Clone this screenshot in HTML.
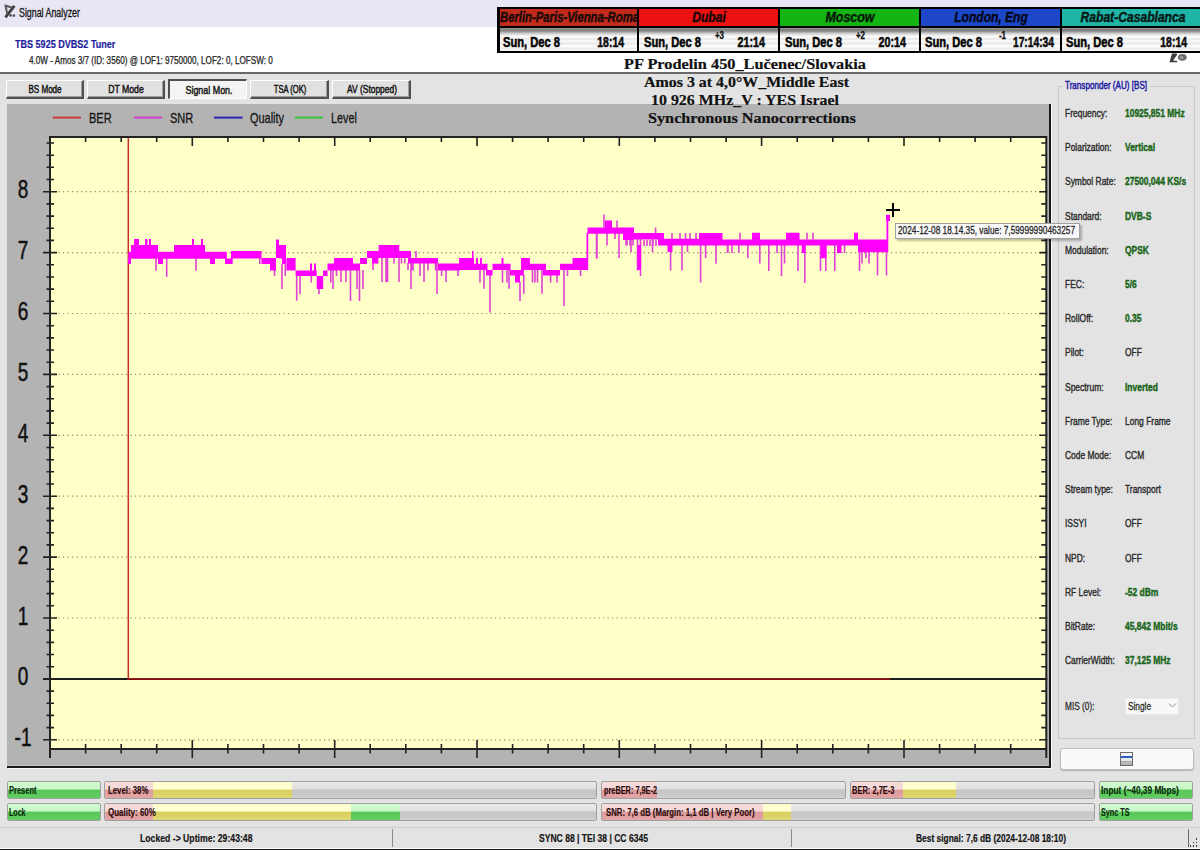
<!DOCTYPE html>
<html><head><meta charset="utf-8"><title>Signal Analyzer</title><style>
html,body{margin:0;padding:0;}
body{width:1200px;height:850px;position:relative;overflow:hidden;background:#E3E3E3;font-family:"Liberation Sans",sans-serif;}
.a{position:absolute;box-sizing:border-box;}
.t{position:absolute;white-space:pre;line-height:1;transform-origin:0 0;}
.btn{position:absolute;box-sizing:border-box;background:#E1E1E1;border-top:1px solid #fff;border-left:1px solid #fff;border-right:2px solid #505050;border-bottom:2px solid #505050;box-shadow:inset -1px -1px 0 #A0A0A0;}
.bar{position:absolute;box-sizing:border-box;border:1px solid #A0A0A0;border-radius:2px;overflow:hidden;background:linear-gradient(#EAEAEA 0,#E0E0E0 42%,#C6C6C6 50%,#C8C8C8 80%,#D4D4D4 100%);}
.seg{position:absolute;top:0;bottom:0;}
.pink{background:linear-gradient(#F6DADA 0,#F6DADA 45%,#DE9A9A 50%,#E2A6A6 100%);}
.yel{background:linear-gradient(#FFFFCF 0,#FFFFCF 45%,#D9CF60 50%,#E0D870 100%);}
.grn{background:linear-gradient(#D2FCD2 0,#C6F6C6 45%,#58C658 50%,#60CE60 100%);}
.hdr{position:absolute;top:0;height:19px;}
</style></head><body>
<div class="a" style="left:0px;top:0px;width:1200px;height:27px;background:#E8E6F4;"></div>
<div class="a" style="left:0px;top:27px;width:1200px;height:46px;background:#FFFFFF;"></div>
<div class="a" style="left:0px;top:72px;width:1200px;height:2px;background:#6A6A6A;"></div>
<svg class="a" style="left:0;top:0" width="22" height="24"><path d="M5.4 17.4L14.4 5.8" stroke="#3e3e3e" stroke-width="2.8" fill="none"/><path d="M4.6 5.2L12.5 7.8M5.6 6L7.2 13.8" stroke="#585858" stroke-width="2" fill="none"/><circle cx="10.6" cy="15.4" r="1.3" fill="#4a4a4a"/><circle cx="13.9" cy="15.6" r="1.3" fill="#4a4a4a"/></svg>
<svg class="a" style="left:1160px;top:48px" width="40" height="20"><path d="M12 5.5H16.8L17 7L13 12.5L17.5 13L17 14.3H9.5L9.8 13.2Z" fill="#3c3c3c"/><ellipse cx="22.3" cy="9.3" rx="4.4" ry="3.4" fill="#6a6a6a"/><ellipse cx="21.5" cy="9.5" rx="2" ry="1.6" fill="#9a9a9a"/></svg>
<div class="a" style="left:497px;top:7px;width:720px;height:46px;background:#000;"></div>
<div class="a" style="left:499.5px;top:9px;width:137.5px;height:17px;background:#C22A1C;"></div>
<div class="a" style="left:499.5px;top:28px;width:137.5px;height:23px;background:linear-gradient(#a0a0a0 0,#808080 1.2px,#858585 3px,#b4b4b4 4.5px,#dadada 6px,#f6f6f6 8px,#ffffff 9px,#e6e6e6 11px,#fcfcfc 13px,#e8e8e8 15.5px,#ffffff 18px,#ececec 20.5px,#f8f8f8 23px);"></div>
<div class="a" style="left:639.0px;top:9px;width:139.0px;height:17px;background:#EC1212;"></div>
<div class="a" style="left:639.0px;top:28px;width:139.0px;height:23px;background:linear-gradient(#a0a0a0 0,#808080 1.2px,#858585 3px,#b4b4b4 4.5px,#dadada 6px,#f6f6f6 8px,#ffffff 9px,#e6e6e6 11px,#fcfcfc 13px,#e8e8e8 15.5px,#ffffff 18px,#ececec 20.5px,#f8f8f8 23px);"></div>
<div class="a" style="left:780.0px;top:9px;width:138.5px;height:17px;background:#14B414;"></div>
<div class="a" style="left:780.0px;top:28px;width:138.5px;height:23px;background:linear-gradient(#a0a0a0 0,#808080 1.2px,#858585 3px,#b4b4b4 4.5px,#dadada 6px,#f6f6f6 8px,#ffffff 9px,#e6e6e6 11px,#fcfcfc 13px,#e8e8e8 15.5px,#ffffff 18px,#ececec 20.5px,#f8f8f8 23px);"></div>
<div class="a" style="left:920.5px;top:9px;width:139.0px;height:17px;background:#1C48C8;"></div>
<div class="a" style="left:920.5px;top:28px;width:139.0px;height:23px;background:linear-gradient(#a0a0a0 0,#808080 1.2px,#858585 3px,#b4b4b4 4.5px,#dadada 6px,#f6f6f6 8px,#ffffff 9px,#e6e6e6 11px,#fcfcfc 13px,#e8e8e8 15.5px,#ffffff 18px,#ececec 20.5px,#f8f8f8 23px);"></div>
<div class="a" style="left:1061.5px;top:9px;width:147.5px;height:17px;background:#1EB5A6;"></div>
<div class="a" style="left:1061.5px;top:28px;width:147.5px;height:23px;background:linear-gradient(#a0a0a0 0,#808080 1.2px,#858585 3px,#b4b4b4 4.5px,#dadada 6px,#f6f6f6 8px,#ffffff 9px,#e6e6e6 11px,#fcfcfc 13px,#e8e8e8 15.5px,#ffffff 18px,#ececec 20.5px,#f8f8f8 23px);"></div>
<div class="btn" style="left:6px;top:80px;width:78px;height:19px;"></div>
<div class="btn" style="left:87px;top:80px;width:78px;height:19px;"></div>
<div class="a" style="left:168px;top:79px;width:79px;height:20px;background:#F4F4F4;border-top:2px solid #505050;border-left:2px solid #505050;border-right:1px solid #fff;border-bottom:1px solid #fff;"></div>
<div class="btn" style="left:250px;top:80px;width:79px;height:19px;"></div>
<div class="btn" style="left:332px;top:80px;width:79px;height:19px;"></div>
<div class="a" style="left:7px;top:104px;width:1042px;height:662px;background:#B3B3B3;"></div>
<div class="a" style="left:1049.2px;top:104px;width:1.8px;height:664px;background:#1a1a1a;"></div>
<div class="a" style="left:1051px;top:104px;width:1px;height:665px;background:#FAFAFA;"></div>
<div class="a" style="left:7px;top:765px;width:1042px;height:1px;background:#C4C4C4;"></div>
<div class="a" style="left:7px;top:766px;width:1044px;height:1.8px;background:#1a1a1a;"></div>
<div class="a" style="left:7px;top:767.8px;width:1045px;height:1px;background:#FAFAFA;"></div>
<svg class="a" style="left:0;top:0" width="1200" height="850" viewBox="0 0 1200 850"><rect x="50" y="137" width="996.3" height="612" fill="#FFFFC8"/><line x1="54" y1="739.8" x2="1042.3" y2="739.8" stroke="#8a8a6a" stroke-width="1.2" stroke-dasharray="1.2 3.3"/><line x1="54" y1="618.0" x2="1042.3" y2="618.0" stroke="#8a8a6a" stroke-width="1.2" stroke-dasharray="1.2 3.3"/><line x1="54" y1="557.1" x2="1042.3" y2="557.1" stroke="#8a8a6a" stroke-width="1.2" stroke-dasharray="1.2 3.3"/><line x1="54" y1="496.2" x2="1042.3" y2="496.2" stroke="#8a8a6a" stroke-width="1.2" stroke-dasharray="1.2 3.3"/><line x1="54" y1="435.3" x2="1042.3" y2="435.3" stroke="#8a8a6a" stroke-width="1.2" stroke-dasharray="1.2 3.3"/><line x1="54" y1="374.4" x2="1042.3" y2="374.4" stroke="#8a8a6a" stroke-width="1.2" stroke-dasharray="1.2 3.3"/><line x1="54" y1="313.5" x2="1042.3" y2="313.5" stroke="#8a8a6a" stroke-width="1.2" stroke-dasharray="1.2 3.3"/><line x1="54" y1="252.6" x2="1042.3" y2="252.6" stroke="#8a8a6a" stroke-width="1.2" stroke-dasharray="1.2 3.3"/><line x1="54" y1="191.7" x2="1042.3" y2="191.7" stroke="#8a8a6a" stroke-width="1.2" stroke-dasharray="1.2 3.3"/><line x1="43" y1="678.9" x2="1046.3" y2="678.9" stroke="#1e1e1e" stroke-width="2"/><path d="M50 758V137H1046.3V758M1046.3 749H50" fill="none" stroke="#222" stroke-width="2"/><path d="M43 739.8H57M1039.3 739.8H1047.3M46.5 727.6H54M1041.3 727.6H1046.3M46.5 715.4H54M1041.3 715.4H1046.3M46.5 703.3H54M1041.3 703.3H1046.3M46.5 691.1H54M1041.3 691.1H1046.3M43 678.9H57M1039.3 678.9H1047.3M46.5 666.7H54M1041.3 666.7H1046.3M46.5 654.5H54M1041.3 654.5H1046.3M46.5 642.4H54M1041.3 642.4H1046.3M46.5 630.2H54M1041.3 630.2H1046.3M43 618.0H57M1039.3 618.0H1047.3M46.5 605.8H54M1041.3 605.8H1046.3M46.5 593.6H54M1041.3 593.6H1046.3M46.5 581.5H54M1041.3 581.5H1046.3M46.5 569.3H54M1041.3 569.3H1046.3M43 557.1H57M1039.3 557.1H1047.3M46.5 544.9H54M1041.3 544.9H1046.3M46.5 532.7H54M1041.3 532.7H1046.3M46.5 520.6H54M1041.3 520.6H1046.3M46.5 508.4H54M1041.3 508.4H1046.3M43 496.2H57M1039.3 496.2H1047.3M46.5 484.0H54M1041.3 484.0H1046.3M46.5 471.8H54M1041.3 471.8H1046.3M46.5 459.7H54M1041.3 459.7H1046.3M46.5 447.5H54M1041.3 447.5H1046.3M43 435.3H57M1039.3 435.3H1047.3M46.5 423.1H54M1041.3 423.1H1046.3M46.5 410.9H54M1041.3 410.9H1046.3M46.5 398.8H54M1041.3 398.8H1046.3M46.5 386.6H54M1041.3 386.6H1046.3M43 374.4H57M1039.3 374.4H1047.3M46.5 362.2H54M1041.3 362.2H1046.3M46.5 350.0H54M1041.3 350.0H1046.3M46.5 337.9H54M1041.3 337.9H1046.3M46.5 325.7H54M1041.3 325.7H1046.3M43 313.5H57M1039.3 313.5H1047.3M46.5 301.3H54M1041.3 301.3H1046.3M46.5 289.1H54M1041.3 289.1H1046.3M46.5 277.0H54M1041.3 277.0H1046.3M46.5 264.8H54M1041.3 264.8H1046.3M43 252.6H57M1039.3 252.6H1047.3M46.5 240.4H54M1041.3 240.4H1046.3M46.5 228.2H54M1041.3 228.2H1046.3M46.5 216.1H54M1041.3 216.1H1046.3M46.5 203.9H54M1041.3 203.9H1046.3M43 191.7H57M1039.3 191.7H1047.3M46.5 179.5H54M1041.3 179.5H1046.3M46.5 167.3H54M1041.3 167.3H1046.3M46.5 155.2H54M1041.3 155.2H1046.3M46.5 143.0H54M1041.3 143.0H1046.3M85.6 137V142M85.6 744V753.5M121.2 137V142M121.2 744V753.5M156.7 137V142M156.7 744V753.5M192.3 137V146M192.3 740V758M227.9 137V142M227.9 744V753.5M263.5 137V142M263.5 744V753.5M299.1 137V142M299.1 744V753.5M334.7 137V146M334.7 740V758M370.2 137V142M370.2 744V753.5M405.8 137V142M405.8 744V753.5M441.4 137V142M441.4 744V753.5M477.0 137V146M477.0 740V758M512.6 137V142M512.6 744V753.5M548.1 137V142M548.1 744V753.5M583.7 137V142M583.7 744V753.5M619.3 137V146M619.3 740V758M654.9 137V142M654.9 744V753.5M690.5 137V142M690.5 744V753.5M726.1 137V142M726.1 744V753.5M761.6 137V146M761.6 740V758M797.2 137V142M797.2 744V753.5M832.8 137V142M832.8 744V753.5M868.4 137V142M868.4 744V753.5M904.0 137V146M904.0 740V758M939.6 137V142M939.6 744V753.5M975.1 137V142M975.1 744V753.5M1010.7 137V142M1010.7 744V753.5" stroke="#222" stroke-width="1.6" fill="none"/><path d="M128.3 138V678.9H890" stroke="#C8302A" stroke-width="1.5" fill="none"/><line x1="128.3" y1="679.2" x2="890" y2="679.2" stroke="#7a1010" stroke-width="1.6"/><path d="M129.0 258.0V264.0M156.0 258.0V270.8M166.7 258.0V276.7M196.0 258.0V270.8M259.8 258.0V264.0M274.5 270.0V276.0M282.0 264.0V289.0M285.3 264.0V276.0M296.7 276.0V300.8M300.0 276.0V294.3M311.3 276.0V282.4M319.0 289.0V294.3M330.8 270.0V282.4M333.0 270.0V289.0M341.0 270.0V282.0M346.0 270.0V282.0M350.5 270.0V301.0M357.0 270.0V289.0M359.5 270.0V301.0M363.0 270.0V289.0M373.0 263.0V270.0M382.0 258.0V282.0M386.0 258.0V282.0M387.5 258.0V282.0M399.0 258.0V282.0M408.0 263.0V270.0M411.0 263.0V289.0M416.0 251.0V258.0M424.0 263.0V282.0M437.0 263.0V294.0M446.0 270.0V282.0M458.0 270.0V276.0M480.0 270.0V282.5M484.0 270.0V288.8M490.0 275.0V312.5M502.5 270.0V282.5M507.0 270.0V282.5M509.0 270.0V288.8M520.0 282.0V301.0M523.8 275.0V293.8M532.5 270.0V282.5M535.0 270.0V282.5M537.5 270.0V282.5M542.0 270.0V293.8M550.6 275.0V282.5M557.0 275.0V282.5M564.0 270.0V306.0M567.5 270.0V276.0M580.6 270.0V276.0M580.6 270.0V276.0M596.5 233.0V258.0M597.0 233.0V258.8M604.0 214.4V227.5M607.0 233.0V245.6M615.0 233.0V239.0M617.0 220.6V227.5M619.0 233.0V258.0M626.0 240.0V245.6M631.0 240.0V252.0M637.5 239.0V270.6M640.5 239.0V276.0M652.5 239.0V252.0M655.6 227.5V233.0M670.6 245.0V270.6M672.0 233.0V239.0M680.0 233.0V239.0M682.0 245.0V270.6M685.6 233.0V239.0M687.5 245.0V252.0M690.0 233.0V239.0M696.0 233.0V239.0M700.6 245.0V282.5M705.6 245.0V258.0M716.0 245.0V263.8M728.0 245.0V252.0M727.5 245.0V253.0M732.0 245.0V253.0M738.8 245.0V253.0M740.0 232.8V239.5M747.8 245.0V258.2M759.8 245.0V263.5M768.8 245.0V271.0M777.0 245.0V253.0M781.5 245.0V276.2M784.5 245.0V263.5M798.0 245.0V271.0M804.8 245.0V283.0M807.0 232.8V239.5M813.0 232.8V239.5M820.5 245.0V271.0M825.8 245.0V271.0M834.8 245.0V271.0M844.5 245.0V253.0M859.5 252.0V271.0M862.0 252.0V263.5M866.0 252.0V258.0M869.0 252.0V263.5M877.5 252.0V275.5M886.5 252.0V275.5M336.5 270.0V276.0M377.7 258.0V263.5M394.0 251.0V263.5M401.5 258.0V263.5M404.8 258.0V263.5M412.3 263.0V270.5M413.0 263.0V270.5M420.0 263.0V276.0M428.0 263.0V270.5M435.6 263.0V270.5M441.6 270.0V276.0M627.0 240.0V245.5M630.0 240.0V245.5M633.0 240.0V245.5M644.0 240.0V246.0M647.0 240.0V246.0M650.0 240.0V246.0M653.0 240.0V246.0M656.0 240.0V246.0M575.0 258.0V270.0M578.0 258.0V270.0M582.0 258.0V270.0" stroke="#E040D8" stroke-width="1.6" fill="none"/><path d="M128.3 251.7H131.0V264.0H128.3ZM131.0 245.0H134.0V258.7H131.0ZM134.0 239.0H139.0V258.7H134.0ZM139.0 245.0H158.0V258.7H139.0ZM145.0 239.0H147.5V245.0H145.0ZM149.0 239.0H151.0V245.0H149.0ZM158.0 251.7H165.0V258.7H158.0ZM158.0 258.0H163.0V264.0H158.0ZM165.0 251.7H174.0V258.7H165.0ZM174.0 245.0H205.0V258.7H174.0ZM192.0 239.0H194.0V245.0H192.0ZM201.0 239.0H203.0V245.0H201.0ZM205.0 251.7H226.8V258.7H205.0ZM210.0 258.0H215.0V264.0H210.0ZM225.0 258.6H232.7V264.0H225.0ZM231.0 251.0H261.5V258.6H231.0ZM261.5 258.0H270.7V264.0H261.5ZM270.0 258.0H276.0V270.5H270.0ZM276.0 239.6H279.0V258.0H276.0ZM279.0 245.0H286.0V258.6H279.0ZM282.0 258.0H286.0V264.0H282.0ZM286.4 258.0H295.6V270.5H286.4ZM295.6 270.5H316.7V276.0H295.6ZM310.0 263.5H312.0V270.5H310.0ZM314.0 263.5H316.0V270.5H314.0ZM316.7 276.0H323.2V289.0H316.7ZM323.0 270.5H327.5V276.0H323.0ZM327.5 263.5H334.0V270.5H327.5ZM334.0 258.0H353.0V270.5H334.0ZM353.0 263.5H360.0V270.5H353.0ZM360.0 258.0H367.0V264.0H360.0ZM367.0 251.0H380.0V258.0H367.0ZM372.0 258.0H378.0V263.5H372.0ZM378.7 245.0H399.3V251.0H378.7ZM378.7 251.0H399.3V258.0H378.7ZM399.0 251.0H411.0V258.0H399.0ZM408.0 258.0H438.0V263.5H408.0ZM438.0 263.5H460.0V270.5H438.0ZM459.0 258.0H474.0V270.0H459.0ZM472.0 251.0H473.5V258.0H472.0ZM474.0 263.8H487.5V270.0H474.0ZM476.0 258.0H478.0V264.0H476.0ZM480.0 258.0H482.0V264.0H480.0ZM486.0 270.0H492.5V275.6H486.0ZM492.5 263.8H510.6V270.0H492.5ZM501.5 258.0H503.5V264.0H501.5ZM510.0 270.0H523.8V275.6H510.0ZM515.0 275.0H520.0V282.5H515.0ZM521.0 258.0H530.0V263.8H521.0ZM521.0 263.8H530.0V270.0H521.0ZM530.0 263.8H546.0V270.0H530.0ZM543.0 270.0H560.0V275.6H543.0ZM560.0 263.8H572.5V270.0H560.0ZM572.5 258.0H587.5V270.0H572.5ZM586.5 233.0H588.2V270.0H586.5ZM637.5 245.0H641.0V270.0H637.5ZM587.5 227.5H605.0V233.8H587.5ZM605.0 220.6H612.0V233.8H605.0ZM612.0 227.5H634.0V233.8H612.0ZM623.0 233.0H634.0V240.0H623.0ZM634.0 233.0H664.0V239.5H634.0ZM658.0 239.0H664.0V245.6H658.0ZM664.0 238.8H699.0V245.6H664.0ZM667.5 245.0H672.5V252.0H667.5ZM699.0 233.0H722.5V245.6H699.0ZM722.5 239.5H752.0V245.5H722.5ZM752.0 232.8H760.0V245.5H752.0ZM760.0 239.5H786.0V245.5H760.0ZM786.0 232.8H799.5V245.5H786.0ZM799.5 239.5H858.0V245.5H799.5ZM801.7 245.0H805.5V253.0H801.7ZM820.5 245.0H826.5V258.2H820.5ZM837.0 245.0H841.5V253.0H837.0ZM854.0 232.8H858.0V239.5H854.0ZM858.0 239.5H886.5V252.2H858.0ZM886.0 214.8H890.0V221.0H886.0ZM886.5 221.0H888.3V252.0H886.5Z" fill="#FF00FF"/><path d="M886 210H900M893 203V217" stroke="#000" stroke-width="2"/><path d="M52.7 117.6H81" stroke="#D23A3A" stroke-width="2"/><path d="M134 117.6H162" stroke="#D040D0" stroke-width="2"/><path d="M214 117.6H242.5" stroke="#2828B0" stroke-width="2"/><path d="M295 117.6H323" stroke="#3CC43C" stroke-width="2"/></svg>
<div class="a" style="left:1058px;top:86px;width:137px;height:653px;border:1px solid #C8C8C8;background:transparent;"></div>
<div class="a" style="left:1062px;top:80px;width:88px;height:12px;background:#E3E3E3;"></div>
<div class="a" style="left:1125px;top:697.5px;width:54px;height:17px;background:#F8F8F8;border:1px solid #EAEAEA;"></div>
<svg class="a" style="left:1168px;top:702px" width="9" height="7"><path d="M1 1.5L4.5 5L8 1.5" stroke="#888" fill="none" stroke-width="1"/></svg>
<div class="a" style="left:1059.5px;top:748px;width:134px;height:22px;background:#FAFAFA;border:1px solid #BDBDBD;border-radius:3px;box-shadow:0 1px 1px rgba(0,0,0,.2);"></div>
<div class="a" style="left:1120px;top:752px;width:13px;height:14px;border:1px solid #6a6a6a;background:linear-gradient(#f4f4f4 0,#f4f4f4 3px,#2a5cc8 3px,#2a5cc8 5px,#e8e8e8 5px,#e8e8e8 8px,#909090 8px,#c0c0c0 9px,#b0b0b0 12px);"></div>
<div class="a" style="left:894.5px;top:222.5px;width:185px;height:16.5px;background:#F8F8F8;border:1px solid #A0A0A0;box-shadow:2px 2px 2px rgba(0,0,0,.25);"></div>
<div class="bar" style="left:6.5px;top:780.5px;width:94.0px;height:18.3px;"><div class="seg grn" style="left:-1.0px;width:94.0px;"></div></div>
<div class="bar" style="left:6.5px;top:803px;width:94.0px;height:18.0px;"><div class="seg grn" style="left:-1.0px;width:94.0px;"></div></div>
<div class="bar" style="left:104px;top:780.5px;width:493.3px;height:18.3px;"><div class="seg pink" style="left:-1.0px;width:49.3px;"></div><div class="seg yel" style="left:48.3px;width:138.9px;"></div></div>
<div class="bar" style="left:104px;top:803px;width:493.3px;height:18.0px;"><div class="seg pink" style="left:-1.0px;width:49.3px;"></div><div class="seg yel" style="left:48.3px;width:198.1px;"></div><div class="seg grn" style="left:246.4px;width:49.0px;"></div></div>
<div class="bar" style="left:601px;top:780.5px;width:245.4px;height:18.3px;"><div class="seg pink" style="left:-1.0px;width:55.6px;"></div></div>
<div class="bar" style="left:850px;top:780.5px;width:244.7px;height:18.3px;"><div class="seg pink" style="left:-1.0px;width:53.0px;"></div><div class="seg yel" style="left:52.0px;width:53.0px;"></div></div>
<div class="bar" style="left:601px;top:803px;width:493.7px;height:18.0px;"><div class="seg pink" style="left:-1.0px;width:161.8px;"></div><div class="seg yel" style="left:160.8px;width:27.8px;"></div></div>
<div class="bar" style="left:1099.2px;top:780.5px;width:94.1px;height:18.3px;"><div class="seg grn" style="left:-1.0px;width:94.1px;"></div></div>
<div class="bar" style="left:1099.2px;top:803px;width:94.1px;height:18.0px;"><div class="seg grn" style="left:-1.0px;width:94.1px;"></div></div>
<div class="a" style="left:0px;top:826.5px;width:1200px;height:1px;background:#D4CCD4;"></div>
<div class="a" style="left:391.5px;top:829px;width:1px;height:18px;background:#8a8a8a;"></div>
<div class="a" style="left:791px;top:829px;width:1px;height:18px;background:#8a8a8a;"></div>
<div class="a" style="left:1188px;top:829px;width:1.2px;height:18px;background:#6a6a6a;"></div>
<div class="a" style="left:0px;top:848px;width:1200px;height:1px;background:#FAFAFA;"></div>
<div class="a" style="left:0px;top:849px;width:1200px;height:1px;background:#1a1a1a;"></div>
<div class="a" style="left:1195.5px;top:838px;width:1.5px;height:1.5px;background:#3a3a3a;"></div>
<div class="a" style="left:1195.5px;top:841.5px;width:1.5px;height:1.5px;background:#3a3a3a;"></div>
<div class="a" style="left:1192.5px;top:841.5px;width:1.5px;height:1.5px;background:#3a3a3a;"></div>
<div class="a" style="left:1195.5px;top:845px;width:1.5px;height:1.5px;background:#3a3a3a;"></div>
<div class="a" style="left:1192.5px;top:845px;width:1.5px;height:1.5px;background:#3a3a3a;"></div>
<div class="a" style="left:1189.5px;top:845px;width:1.5px;height:1.5px;background:#3a3a3a;"></div>
<div class="t" style="left:19.0px;top:6.5px;font-size:12px;color:#141414;transform:scaleX(0.737);-webkit-text-stroke:0.3px #141414;">Signal Analyzer</div>
<div class="t" style="left:15.2px;top:38.9px;font-size:11px;color:#1d1d9e;transform:scaleX(0.822);font-weight:700;-webkit-text-stroke:0.2px #1d1d9e;">TBS 5925 DVBS2 Tuner</div>
<div class="t" style="left:29.2px;top:56.0px;font-size:10px;color:#222;transform:scaleX(0.812);-webkit-text-stroke:0.25px #222;">4.0W - Amos 3/7 (ID: 3560) @ LOF1: 9750000, LOF2: 0, LOFSW: 0</div>
<div class="t" style="left:500.0px;top:10.1px;font-size:14px;color:#1a0a08;transform:scaleX(0.807);font-weight:700;font-style:italic;-webkit-text-stroke:0.45px #1a0a08;">Berlin-Paris-Vienna-Roma</div>
<div class="t" style="left:709.0px;top:10.1px;font-size:14px;color:#1a0606;transform:scaleX(0.861) translateX(-50%);font-weight:700;font-style:italic;-webkit-text-stroke:0.45px #1a0606;">Dubai</div>
<div class="t" style="left:849.5px;top:10.1px;font-size:14px;color:#061a06;transform:scaleX(0.887) translateX(-50%);font-weight:700;font-style:italic;-webkit-text-stroke:0.45px #061a06;">Moscow</div>
<div class="t" style="left:990.7px;top:10.1px;font-size:14px;color:#06061a;transform:scaleX(0.859) translateX(-50%);font-weight:700;font-style:italic;-webkit-text-stroke:0.45px #06061a;">London, Eng</div>
<div class="t" style="left:1132.5px;top:10.1px;font-size:14px;color:#061a18;transform:scaleX(0.865) translateX(-50%);font-weight:700;font-style:italic;-webkit-text-stroke:0.45px #061a18;">Rabat-Casablanca</div>
<div class="t" style="left:503.3px;top:35.4px;font-size:14px;color:#050505;transform:scaleX(0.796);font-weight:700;-webkit-text-stroke:0.55px #050505;">Sun, Dec 8</div>
<div class="t" style="left:624.0px;top:35.4px;font-size:14px;color:#0a0a0a;transform:scaleX(0.746) translateX(-100%);font-weight:700;-webkit-text-stroke:0.55px #0a0a0a;">18:14</div>
<div class="t" style="left:643.8px;top:35.4px;font-size:14px;color:#050505;transform:scaleX(0.796);font-weight:700;-webkit-text-stroke:0.55px #050505;">Sun, Dec 8</div>
<div class="t" style="left:765.0px;top:35.4px;font-size:14px;color:#0a0a0a;transform:scaleX(0.768) translateX(-100%);font-weight:700;-webkit-text-stroke:0.55px #0a0a0a;">21:14</div>
<div class="t" style="left:724.0px;top:31.0px;font-size:10px;color:#0a0a0a;transform:scaleX(0.800) translateX(-100%);font-weight:700;-webkit-text-stroke:0.25px #0a0a0a;">+3</div>
<div class="t" style="left:784.8px;top:35.4px;font-size:14px;color:#050505;transform:scaleX(0.796);font-weight:700;-webkit-text-stroke:0.55px #050505;">Sun, Dec 8</div>
<div class="t" style="left:906.0px;top:35.4px;font-size:14px;color:#0a0a0a;transform:scaleX(0.768) translateX(-100%);font-weight:700;-webkit-text-stroke:0.55px #0a0a0a;">20:14</div>
<div class="t" style="left:865.0px;top:31.0px;font-size:10px;color:#0a0a0a;transform:scaleX(0.800) translateX(-100%);font-weight:700;-webkit-text-stroke:0.25px #0a0a0a;">+2</div>
<div class="t" style="left:925.3px;top:35.4px;font-size:14px;color:#050505;transform:scaleX(0.796);font-weight:700;-webkit-text-stroke:0.55px #050505;">Sun, Dec 8</div>
<div class="t" style="left:1053.5px;top:35.4px;font-size:14px;color:#0a0a0a;transform:scaleX(0.732) translateX(-100%);font-weight:700;-webkit-text-stroke:0.55px #0a0a0a;">17:14:34</div>
<div class="t" style="left:1005.5px;top:31.0px;font-size:10px;color:#0a0a0a;transform:scaleX(0.800) translateX(-100%);font-weight:700;-webkit-text-stroke:0.25px #0a0a0a;">-1</div>
<div class="t" style="left:1066.3px;top:35.4px;font-size:14px;color:#050505;transform:scaleX(0.796);font-weight:700;-webkit-text-stroke:0.55px #050505;">Sun, Dec 8</div>
<div class="t" style="left:1187.3px;top:35.4px;font-size:14px;color:#0a0a0a;transform:scaleX(0.746) translateX(-100%);font-weight:700;-webkit-text-stroke:0.55px #0a0a0a;">18:14</div>
<div class="t" style="left:624.4px;top:57.2px;font-size:14.5px;color:#111;transform:scaleX(1.125);font-weight:700;font-family:'Liberation Serif',serif;-webkit-text-stroke:0.2px #111;">PF Prodelin 450_Lučenec/Slovakia</div>
<div class="t" style="left:644.0px;top:74.9px;font-size:14.5px;color:#111;transform:scaleX(1.098);font-weight:700;font-family:'Liberation Serif',serif;-webkit-text-stroke:0.2px #111;">Amos 3 at 4,0°W_Middle East</div>
<div class="t" style="left:651.0px;top:92.6px;font-size:14.5px;color:#111;transform:scaleX(1.098);font-weight:700;font-family:'Liberation Serif',serif;-webkit-text-stroke:0.2px #111;">10 926 MHz_V : YES Israel</div>
<div class="t" style="left:648.0px;top:110.6px;font-size:14.5px;color:#111;transform:scaleX(1.118);font-weight:700;font-family:'Liberation Serif',serif;-webkit-text-stroke:0.2px #111;">Synchronous Nanocorrections</div>
<div class="t" style="left:45.0px;top:84.2px;font-size:11.5px;color:#151515;transform:scaleX(0.702) translateX(-50%);-webkit-text-stroke:0.5px #151515;">BS Mode</div>
<div class="t" style="left:126.0px;top:84.2px;font-size:11.5px;color:#151515;transform:scaleX(0.756) translateX(-50%);-webkit-text-stroke:0.5px #151515;">DT Mode</div>
<div class="t" style="left:208.5px;top:84.7px;font-size:11.5px;color:#151515;transform:scaleX(0.774) translateX(-50%);-webkit-text-stroke:0.5px #151515;">Signal Mon.</div>
<div class="t" style="left:289.5px;top:84.2px;font-size:11.5px;color:#151515;transform:scaleX(0.661) translateX(-50%);-webkit-text-stroke:0.5px #151515;">TSA (OK)</div>
<div class="t" style="left:371.5px;top:84.2px;font-size:11.5px;color:#151515;transform:scaleX(0.733) translateX(-50%);-webkit-text-stroke:0.5px #151515;">AV (Stopped)</div>
<div class="t" style="left:88.7px;top:110.0px;font-size:15px;color:#151515;transform:scaleX(0.736);-webkit-text-stroke:0.3px #151515;">BER</div>
<div class="t" style="left:169.7px;top:110.0px;font-size:15px;color:#151515;transform:scaleX(0.736);-webkit-text-stroke:0.3px #151515;">SNR</div>
<div class="t" style="left:250.0px;top:110.0px;font-size:15px;color:#151515;transform:scaleX(0.728);-webkit-text-stroke:0.3px #151515;">Quality</div>
<div class="t" style="left:331.0px;top:110.0px;font-size:15px;color:#151515;transform:scaleX(0.725);-webkit-text-stroke:0.3px #151515;">Level</div>
<div class="t" style="left:22.6px;top:177.2px;font-size:25px;color:#111;transform:scaleX(0.760) translateX(-50%);-webkit-text-stroke:0.5px #111;">8</div>
<div class="t" style="left:22.6px;top:238.1px;font-size:25px;color:#111;transform:scaleX(0.760) translateX(-50%);-webkit-text-stroke:0.5px #111;">7</div>
<div class="t" style="left:22.6px;top:299.0px;font-size:25px;color:#111;transform:scaleX(0.760) translateX(-50%);-webkit-text-stroke:0.5px #111;">6</div>
<div class="t" style="left:22.6px;top:359.9px;font-size:25px;color:#111;transform:scaleX(0.760) translateX(-50%);-webkit-text-stroke:0.5px #111;">5</div>
<div class="t" style="left:22.6px;top:420.8px;font-size:25px;color:#111;transform:scaleX(0.760) translateX(-50%);-webkit-text-stroke:0.5px #111;">4</div>
<div class="t" style="left:22.6px;top:481.7px;font-size:25px;color:#111;transform:scaleX(0.760) translateX(-50%);-webkit-text-stroke:0.5px #111;">3</div>
<div class="t" style="left:22.6px;top:542.6px;font-size:25px;color:#111;transform:scaleX(0.760) translateX(-50%);-webkit-text-stroke:0.5px #111;">2</div>
<div class="t" style="left:22.6px;top:603.5px;font-size:25px;color:#111;transform:scaleX(0.760) translateX(-50%);-webkit-text-stroke:0.5px #111;">1</div>
<div class="t" style="left:22.6px;top:664.4px;font-size:25px;color:#111;transform:scaleX(0.760) translateX(-50%);-webkit-text-stroke:0.5px #111;">0</div>
<div class="t" style="left:22.6px;top:725.3px;font-size:25px;color:#111;transform:scaleX(0.760) translateX(-50%);-webkit-text-stroke:0.5px #111;">-1</div>
<div class="t" style="left:898.0px;top:225.1px;font-size:11.5px;color:#262626;transform:scaleX(0.719);-webkit-text-stroke:0.3px #262626;">2024-12-08 18.14.35, value: 7,59999990463257</div>
<div class="t" style="left:1065.0px;top:80.3px;font-size:11.5px;color:#1c1ca4;transform:scaleX(0.704);-webkit-text-stroke:0.5px #1c1ca4;">Transponder (AU) [BS]</div>
<div class="t" style="left:1065.0px;top:107.9px;font-size:11.5px;color:#2a2a2a;transform:scaleX(0.735);-webkit-text-stroke:0.4px #2a2a2a;">Frequency:</div>
<div class="t" style="left:1125.0px;top:107.9px;font-size:11.5px;color:#1a661a;transform:scaleX(0.735);font-weight:700;-webkit-text-stroke:0.45px #1a661a;">10925,851 MHz</div>
<div class="t" style="left:1065.0px;top:142.1px;font-size:11.5px;color:#2a2a2a;transform:scaleX(0.735);-webkit-text-stroke:0.4px #2a2a2a;">Polarization:</div>
<div class="t" style="left:1125.0px;top:142.1px;font-size:11.5px;color:#1a661a;transform:scaleX(0.735);font-weight:700;-webkit-text-stroke:0.45px #1a661a;">Vertical</div>
<div class="t" style="left:1065.0px;top:176.3px;font-size:11.5px;color:#2a2a2a;transform:scaleX(0.735);-webkit-text-stroke:0.4px #2a2a2a;">Symbol Rate:</div>
<div class="t" style="left:1125.0px;top:176.3px;font-size:11.5px;color:#1a661a;transform:scaleX(0.735);font-weight:700;-webkit-text-stroke:0.45px #1a661a;">27500,044 KS/s</div>
<div class="t" style="left:1065.0px;top:210.5px;font-size:11.5px;color:#2a2a2a;transform:scaleX(0.735);-webkit-text-stroke:0.4px #2a2a2a;">Standard:</div>
<div class="t" style="left:1125.0px;top:210.5px;font-size:11.5px;color:#1a661a;transform:scaleX(0.735);font-weight:700;-webkit-text-stroke:0.45px #1a661a;">DVB-S</div>
<div class="t" style="left:1065.0px;top:244.7px;font-size:11.5px;color:#2a2a2a;transform:scaleX(0.735);-webkit-text-stroke:0.4px #2a2a2a;">Modulation:</div>
<div class="t" style="left:1125.0px;top:244.7px;font-size:11.5px;color:#1a661a;transform:scaleX(0.735);font-weight:700;-webkit-text-stroke:0.45px #1a661a;">QPSK</div>
<div class="t" style="left:1065.0px;top:278.9px;font-size:11.5px;color:#2a2a2a;transform:scaleX(0.735);-webkit-text-stroke:0.4px #2a2a2a;">FEC:</div>
<div class="t" style="left:1125.0px;top:278.9px;font-size:11.5px;color:#1a661a;transform:scaleX(0.735);font-weight:700;-webkit-text-stroke:0.45px #1a661a;">5/6</div>
<div class="t" style="left:1065.0px;top:313.1px;font-size:11.5px;color:#2a2a2a;transform:scaleX(0.735);-webkit-text-stroke:0.4px #2a2a2a;">RollOff:</div>
<div class="t" style="left:1125.0px;top:313.1px;font-size:11.5px;color:#1a661a;transform:scaleX(0.735);font-weight:700;-webkit-text-stroke:0.45px #1a661a;">0.35</div>
<div class="t" style="left:1065.0px;top:347.3px;font-size:11.5px;color:#2a2a2a;transform:scaleX(0.735);-webkit-text-stroke:0.4px #2a2a2a;">Pilot:</div>
<div class="t" style="left:1125.0px;top:347.3px;font-size:11.5px;color:#2a2a2a;transform:scaleX(0.735);-webkit-text-stroke:0.4px #2a2a2a;">OFF</div>
<div class="t" style="left:1065.0px;top:381.5px;font-size:11.5px;color:#2a2a2a;transform:scaleX(0.735);-webkit-text-stroke:0.4px #2a2a2a;">Spectrum:</div>
<div class="t" style="left:1125.0px;top:381.5px;font-size:11.5px;color:#1a661a;transform:scaleX(0.735);font-weight:700;-webkit-text-stroke:0.45px #1a661a;">Inverted</div>
<div class="t" style="left:1065.0px;top:415.7px;font-size:11.5px;color:#2a2a2a;transform:scaleX(0.735);-webkit-text-stroke:0.4px #2a2a2a;">Frame Type:</div>
<div class="t" style="left:1125.0px;top:415.7px;font-size:11.5px;color:#2a2a2a;transform:scaleX(0.735);-webkit-text-stroke:0.4px #2a2a2a;">Long Frame</div>
<div class="t" style="left:1065.0px;top:449.9px;font-size:11.5px;color:#2a2a2a;transform:scaleX(0.735);-webkit-text-stroke:0.4px #2a2a2a;">Code Mode:</div>
<div class="t" style="left:1125.0px;top:449.9px;font-size:11.5px;color:#2a2a2a;transform:scaleX(0.735);-webkit-text-stroke:0.4px #2a2a2a;">CCM</div>
<div class="t" style="left:1065.0px;top:484.1px;font-size:11.5px;color:#2a2a2a;transform:scaleX(0.735);-webkit-text-stroke:0.4px #2a2a2a;">Stream type:</div>
<div class="t" style="left:1125.0px;top:484.1px;font-size:11.5px;color:#2a2a2a;transform:scaleX(0.735);-webkit-text-stroke:0.4px #2a2a2a;">Transport</div>
<div class="t" style="left:1065.0px;top:518.3px;font-size:11.5px;color:#2a2a2a;transform:scaleX(0.735);-webkit-text-stroke:0.4px #2a2a2a;">ISSYI</div>
<div class="t" style="left:1125.0px;top:518.3px;font-size:11.5px;color:#2a2a2a;transform:scaleX(0.735);-webkit-text-stroke:0.4px #2a2a2a;">OFF</div>
<div class="t" style="left:1065.0px;top:552.5px;font-size:11.5px;color:#2a2a2a;transform:scaleX(0.735);-webkit-text-stroke:0.4px #2a2a2a;">NPD:</div>
<div class="t" style="left:1125.0px;top:552.5px;font-size:11.5px;color:#2a2a2a;transform:scaleX(0.735);-webkit-text-stroke:0.4px #2a2a2a;">OFF</div>
<div class="t" style="left:1065.0px;top:586.7px;font-size:11.5px;color:#2a2a2a;transform:scaleX(0.735);-webkit-text-stroke:0.4px #2a2a2a;">RF Level:</div>
<div class="t" style="left:1125.0px;top:586.7px;font-size:11.5px;color:#1a661a;transform:scaleX(0.735);font-weight:700;-webkit-text-stroke:0.45px #1a661a;">-52 dBm</div>
<div class="t" style="left:1065.0px;top:620.9px;font-size:11.5px;color:#2a2a2a;transform:scaleX(0.735);-webkit-text-stroke:0.4px #2a2a2a;">BitRate:</div>
<div class="t" style="left:1125.0px;top:620.9px;font-size:11.5px;color:#1a661a;transform:scaleX(0.735);font-weight:700;-webkit-text-stroke:0.45px #1a661a;">45,842 Mbit/s</div>
<div class="t" style="left:1065.0px;top:655.1px;font-size:11.5px;color:#2a2a2a;transform:scaleX(0.735);-webkit-text-stroke:0.4px #2a2a2a;">CarrierWidth:</div>
<div class="t" style="left:1125.0px;top:655.1px;font-size:11.5px;color:#1a661a;transform:scaleX(0.735);font-weight:700;-webkit-text-stroke:0.45px #1a661a;">37,125 MHz</div>
<div class="t" style="left:1065.0px;top:700.9px;font-size:11.5px;color:#2e2e2e;transform:scaleX(0.720);-webkit-text-stroke:0.3px #2e2e2e;">MIS (0):</div>
<div class="t" style="left:1127.5px;top:700.9px;font-size:11.5px;color:#2e2e2e;transform:scaleX(0.720);-webkit-text-stroke:0.3px #2e2e2e;">Single</div>
<div class="t" style="left:8.5px;top:785.0px;font-size:11px;color:#0b2a0b;transform:scaleX(0.681);font-weight:700;-webkit-text-stroke:0.15px #0b2a0b;">Present</div>
<div class="t" style="left:8.5px;top:807.3px;font-size:11px;color:#0b2a0b;transform:scaleX(0.642);font-weight:700;-webkit-text-stroke:0.15px #0b2a0b;">Lock</div>
<div class="t" style="left:108.2px;top:785.0px;font-size:11px;color:#2a0a0a;transform:scaleX(0.709);font-weight:700;-webkit-text-stroke:0.15px #2a0a0a;">Level: 38%</div>
<div class="t" style="left:108.2px;top:807.3px;font-size:11px;color:#2a0a0a;transform:scaleX(0.725);font-weight:700;-webkit-text-stroke:0.15px #2a0a0a;">Quality: 60%</div>
<div class="t" style="left:603.6px;top:785.0px;font-size:11px;color:#2a0a0a;transform:scaleX(0.667);font-weight:700;-webkit-text-stroke:0.15px #2a0a0a;">preBER: 7,9E-2</div>
<div class="t" style="left:605.6px;top:807.3px;font-size:11px;color:#2a0a0a;transform:scaleX(0.709);font-weight:700;-webkit-text-stroke:0.15px #2a0a0a;">SNR: 7,6 dB (Margin: 1,1 dB | Very Poor)</div>
<div class="t" style="left:852.0px;top:785.0px;font-size:11px;color:#2a0a0a;transform:scaleX(0.682);font-weight:700;-webkit-text-stroke:0.15px #2a0a0a;">BER: 2,7E-3</div>
<div class="t" style="left:1100.8px;top:785.0px;font-size:11px;color:#0b2a0b;transform:scaleX(0.756);font-weight:700;-webkit-text-stroke:0.15px #0b2a0b;">Input (~40,39 Mbps)</div>
<div class="t" style="left:1100.8px;top:807.3px;font-size:11px;color:#0b2a0b;transform:scaleX(0.657);font-weight:700;-webkit-text-stroke:0.15px #0b2a0b;">Sync TS</div>
<div class="t" style="left:140.0px;top:833.2px;font-size:11px;color:#151515;transform:scaleX(0.788);font-weight:700;-webkit-text-stroke:0.2px #151515;">Locked -&gt; Uptime: 29:43:48</div>
<div class="t" style="left:539.0px;top:833.2px;font-size:11px;color:#151515;transform:scaleX(0.778);font-weight:700;-webkit-text-stroke:0.2px #151515;">SYNC 88 | TEI 38 | CC 6345</div>
<div class="t" style="left:916.0px;top:833.2px;font-size:11px;color:#151515;transform:scaleX(0.764);font-weight:700;-webkit-text-stroke:0.2px #151515;">Best signal: 7,6 dB (2024-12-08 18:10)</div>
</body></html>
